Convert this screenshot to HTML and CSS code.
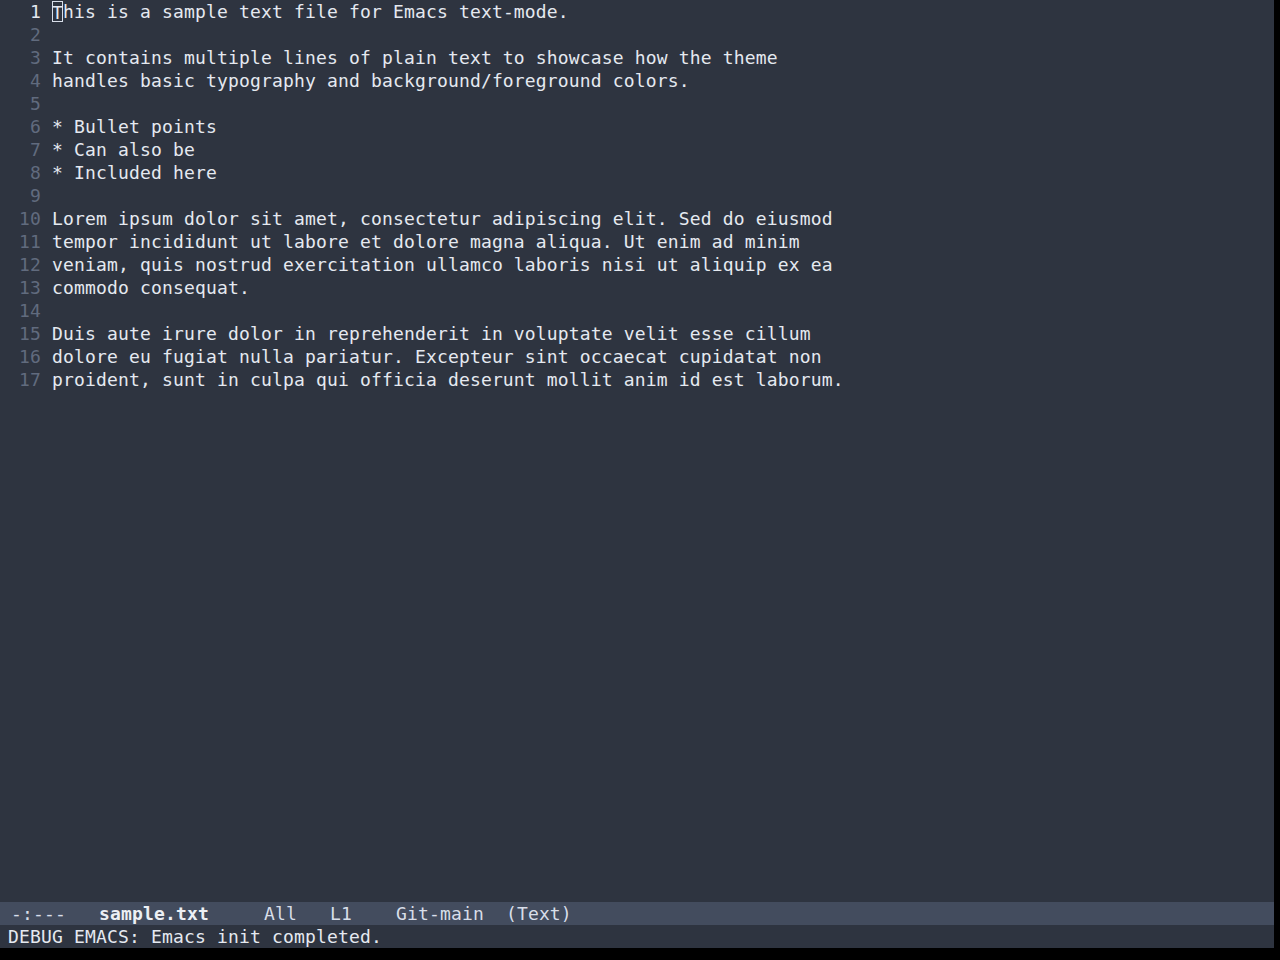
FILE: index.html
```html
<!DOCTYPE html>
<html>
<head>
<meta charset="utf-8">
<link rel="stylesheet" href="styles.css">
</head>
<body>
<div class="frame">
  <div class="buffer">
    <div class="line current"><span class="ln">1</span><span class="tx"><span class="cursor">T</span>his is a sample text file for Emacs text-mode.</span></div>
    <div class="line"><span class="ln">2</span><span class="tx"></span></div>
    <div class="line"><span class="ln">3</span><span class="tx">It contains multiple lines of plain text to showcase how the theme</span></div>
    <div class="line"><span class="ln">4</span><span class="tx">handles basic typography and background/foreground colors.</span></div>
    <div class="line"><span class="ln">5</span><span class="tx"></span></div>
    <div class="line"><span class="ln">6</span><span class="tx">* Bullet points</span></div>
    <div class="line"><span class="ln">7</span><span class="tx">* Can also be</span></div>
    <div class="line"><span class="ln">8</span><span class="tx">* Included here</span></div>
    <div class="line"><span class="ln">9</span><span class="tx"></span></div>
    <div class="line"><span class="ln">10</span><span class="tx">Lorem ipsum dolor sit amet, consectetur adipiscing elit. Sed do eiusmod</span></div>
    <div class="line"><span class="ln">11</span><span class="tx">tempor incididunt ut labore et dolore magna aliqua. Ut enim ad minim</span></div>
    <div class="line"><span class="ln">12</span><span class="tx">veniam, quis nostrud exercitation ullamco laboris nisi ut aliquip ex ea</span></div>
    <div class="line"><span class="ln">13</span><span class="tx">commodo consequat.</span></div>
    <div class="line"><span class="ln">14</span><span class="tx"></span></div>
    <div class="line"><span class="ln">15</span><span class="tx">Duis aute irure dolor in reprehenderit in voluptate velit esse cillum</span></div>
    <div class="line"><span class="ln">16</span><span class="tx">dolore eu fugiat nulla pariatur. Excepteur sint occaecat cupidatat non</span></div>
    <div class="line"><span class="ln">17</span><span class="tx">proident, sunt in culpa qui officia deserunt mollit anim id est laborum.</span></div>
  </div>
  <div class="modeline"> -:---   <b class="bufname">sample.txt</b>     All   L1    Git-main  (Text)</div>
  <div class="echo">DEBUG EMACS: Emacs init completed.</div>
</div>
</body>
</html>
```

FILE: styles.css
```css
html, body {
  margin: 0;
  padding: 0;
  background: #000000;
}

.frame {
  width: 1274px;
  height: 948px;
  background: #2e3440;
  display: flex;
  flex-direction: column;
  font-family: "DejaVu Sans Mono", monospace;
  font-size: 18px;
  letter-spacing: 0.16px;
  color: #d8dee9;
}

.buffer {
  flex: 1;
  display: flex;
  flex-direction: column;
}

.line {
  display: flex;
  height: 23px;
  line-height: 23px;
  white-space: pre;
}

.ln {
  width: 33px;
  margin-left: 8px;
  margin-right: 11px;
  text-align: right;
  color: #616b7e;
  flex: none;
}

.current .ln {
  color: #e5e9f0;
}

.tx {
  color: #e5e9f0;
}

.cursor {
  display: inline-block;
  height: 21px;
  line-height: 23px;
  vertical-align: top;
  margin-top: 1px;
  box-shadow: inset 0 0 0 1px #d8dee9;
}

.modeline {
  height: 23px;
  line-height: 23px;
  background: #434c5e;
  color: #d8dee9;
  white-space: pre;
}

.bufname {
  font-weight: bold;
  color: #eceff4;
}

.echo {
  height: 23px;
  line-height: 23px;
  padding-left: 8px;
  white-space: pre;
  color: #e5e9f0;
}
```
